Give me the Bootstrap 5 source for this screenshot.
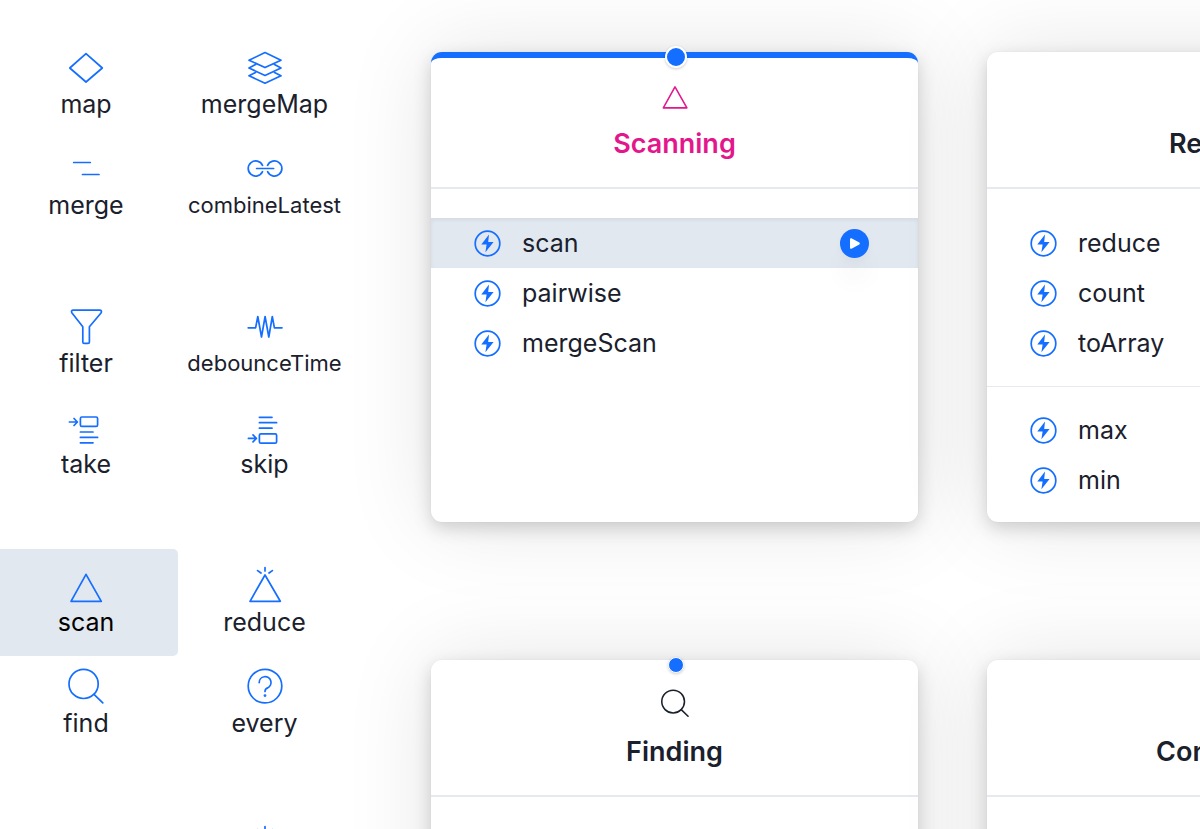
<!DOCTYPE html>
<html lang="en">
<head>
<meta charset="utf-8">
<meta name="viewport" content="width=device-width, initial-scale=1">
<title>Operators</title>
<link href="https://cdn.jsdelivr.net/npm/bootstrap@5.3.0/dist/css/bootstrap.min.css" rel="stylesheet">
<style>
  :root { --ink: #1a202c; --blue: #146eff; --fill: #e2e8f0; --line: #e6eaf0; --pink: #e3168c; }
  body { font-family: Inter, "Liberation Sans", sans-serif; color: var(--ink); background: #fff; }
  svg { display: block; overflow: visible; fill: none; stroke: currentColor; stroke-width: 1.7; stroke-linecap: round; stroke-linejoin: round; }

  /* operator palette */
  .palette { display: grid; grid-template-columns: 172px 173px; column-gap: 6px; padding-top: 34px; }
  .palette-group { display: grid; grid-template-columns: subgrid; grid-column: 1 / -1; }
  .palette-group + .palette-group { margin-top: 57px; }
  .op { color: var(--ink); padding: 16px 0 13px; font-size: 25px; line-height: 36px; }
  .op svg { width: 36px; height: 36px; color: var(--blue); }
  .op-long { font-size: 22px; }
  .op.active { color: #000; background: var(--fill); border-radius: 0 5px 5px 0; margin: -3px -6px -3px 0; padding: 19px 6px 16px 0; }

  /* board of category panels */
  .board { padding: 52px 0 0 80px; }
  .board-grid { display: grid; grid-template-columns: 487px 487px; gap: 138px 69px; }
  .panel { border: 0; border-radius: 11px; min-height: 470px; color: var(--ink);
    box-shadow: 0 0 2px rgba(0,0,0,.05), 0 6px 18px rgba(0,0,0,.17), 0 0 90px rgba(0,0,0,.11); }
  .panel-head { padding: 30px 0 25px; gap: 16px; border-bottom: 2px solid var(--line); }
  .panel-head svg { width: 28px; height: 28px; stroke-width: 2; }
  .panel-head h2 { font-size: 27px; line-height: 36px; font-weight: 600; }
  .panel.selected { border-top: 6px solid var(--blue); }
  .panel.selected .panel-head { padding-top: 24px; color: var(--pink); }
  .pin { width: 16px; height: 16px; background: var(--blue); border: 1px solid #fff; top: 5px; left: calc(50% + 1px); box-shadow: 0 1px 3px rgba(0,0,0,.2); }
  .selected .pin { width: 22px; height: 22px; border-width: 2px; top: -1px; }
  .rows { padding: 29px 0 18px; }
  .rows + .rows { padding: 18px 0 17px; border-top: 1px solid var(--line); }
  .entry { height: 50px; padding: 0 49px 0 43px; gap: 21px; font-size: 25px; line-height: 36px; }
  .entry svg { width: 27px; height: 27px; color: var(--blue); }
  .entry.current { background: var(--fill); box-shadow: inset 0 2px 4px rgba(0,0,0,.06); }
  .play { width: 29px; height: 29px; background: var(--blue); color: #fff; box-shadow: 0 4px 8px rgba(0,0,0,.03), 0 24px 24px rgba(0,0,0,.03); }
  .play .tri { width: 29px; height: 29px; color: #fff; }
</style>
</head>
<body class="vh-100 overflow-hidden">

<svg width="0" height="0" class="position-absolute" aria-hidden="true">
  <symbol id="i-map" viewBox="0 0 36 36"><path d="M18 3.7 34.3 18 18 32 1.8 18Z"/></symbol>
  <symbol id="i-layers" viewBox="0 0 36 36"><path d="M18 2.6 34 10.2 18 17.6 2 10.2ZM8.5 14.6 2 18 18 25.4 34 18 27.5 14.6M8.5 22.4 2 25.8 18 33.2 34 25.8 27.5 22.4"/></symbol>
  <symbol id="i-merge" viewBox="0 0 36 36"><path d="M5.7 11.5H22.3M14.5 23.5H31"/></symbol>
  <symbol id="i-link" viewBox="0 0 36 36"><path d="M15.5 14.3A7.5 7.5 0 1 0 15.5 20.7M20.6 14.3A7.5 7.5 0 1 1 20.6 20.7M9.6 17.5H26.6"/></symbol>
  <symbol id="i-filter" viewBox="0 0 36 36"><path d="M5 1.2H32Q34.3 1.6 33 4L21.4 17.8V33Q21.4 34.4 20 34.4H16.2Q14.8 34.4 14.8 33V17.8L4 4Q2.6 1.6 5 1.2Z"/></symbol>
  <symbol id="i-wave" viewBox="0 0 36 36"><path d="M1.2 18.8H8.6L10.8 7.5 14.5 28 18.1 7.5 21.8 28 25.3 7.5 27.4 18.8H35"/></symbol>
  <symbol id="i-take" viewBox="0 0 36 36"><rect x="12.4" y="7" width="17.2" height="9.4" rx="1.5"/><path d="M1.4 12H9.4M6 8.5 9.4 12 6 15.5M12.4 22H25M12.4 27.4H29.6M12.4 32.8H25"/></symbol>
  <symbol id="i-skip" viewBox="0 0 36 36"><rect x="12.4" y="23.8" width="17.2" height="9.4" rx="1.5"/><path d="M1.4 28.4H9.4M6 24.9 9.4 28.4 6 31.9M12.4 7.3H25M12.4 12.7H29.6M12.4 18.2H25"/></symbol>
  <symbol id="i-scan" viewBox="0 0 36 36"><path d="M18 6.3 33.3 33.3H3Z"/></symbol>
  <symbol id="i-reduce" viewBox="0 0 36 36" overflow="visible"><path d="M18 7 33.3 33.3H3ZM18-.5V3M10.6 2.6 14 5M25.4 2.6 22 5"/></symbol>
  <symbol id="i-find" viewBox="0 0 36 36" overflow="visible"><circle cx="15.6" cy="14.9" r="14.6"/><path d="M26 25.3 34.8 33.8"/></symbol>
  <symbol id="i-every" viewBox="0 0 36 36" overflow="visible"><circle cx="18" cy="17.1" r="16.8"/><path d="M12.2 13.6A5.9 5.9 0 1 1 20.6 18.9Q18 20 18 22.4"/><circle cx="18" cy="26.6" r=".6" fill="currentColor"/></symbol>
  <symbol id="i-bolt" viewBox="0 0 27 27"><circle cx="13.5" cy="13.5" r="12.3"/><path fill="currentColor" stroke="none" d="M15 4.6 7.3 14.4H12.6L11.4 22.2 19.6 12H14.2Z"/></symbol>
</svg>

<div class="d-flex">
  <nav class="palette flex-shrink-0 align-content-start text-center" aria-label="Operators">
    <div class="palette-group">
      <a href="#map" class="op d-flex flex-column align-items-center text-decoration-none"><svg aria-hidden="true"><use href="#i-map"/></svg>map</a>
      <a href="#mergeMap" class="op d-flex flex-column align-items-center text-decoration-none"><svg aria-hidden="true"><use href="#i-layers"/></svg>mergeMap</a>
      <a href="#merge" class="op d-flex flex-column align-items-center text-decoration-none"><svg aria-hidden="true"><use href="#i-merge"/></svg>merge</a>
      <a href="#combineLatest" class="op op-long d-flex flex-column align-items-center text-decoration-none"><svg aria-hidden="true"><use href="#i-link"/></svg>combineLatest</a>
    </div>
    <div class="palette-group">
      <a href="#filter" class="op d-flex flex-column align-items-center text-decoration-none"><svg aria-hidden="true"><use href="#i-filter"/></svg>filter</a>
      <a href="#debounceTime" class="op op-long d-flex flex-column align-items-center text-decoration-none"><svg aria-hidden="true"><use href="#i-wave"/></svg>debounceTime</a>
      <a href="#take" class="op d-flex flex-column align-items-center text-decoration-none"><svg aria-hidden="true"><use href="#i-take"/></svg>take</a>
      <a href="#skip" class="op d-flex flex-column align-items-center text-decoration-none"><svg aria-hidden="true"><use href="#i-skip"/></svg>skip</a>
    </div>
    <div class="palette-group">
      <a href="#scan" class="op active d-flex flex-column align-items-center text-decoration-none" aria-current="true"><svg aria-hidden="true"><use href="#i-scan"/></svg>scan</a>
      <a href="#reduce" class="op d-flex flex-column align-items-center text-decoration-none"><svg aria-hidden="true"><use href="#i-reduce"/></svg>reduce</a>
      <a href="#find" class="op d-flex flex-column align-items-center text-decoration-none"><svg aria-hidden="true"><use href="#i-find"/></svg>find</a>
      <a href="#every" class="op d-flex flex-column align-items-center text-decoration-none"><svg aria-hidden="true"><use href="#i-every"/></svg>every</a>
    </div>
    <div class="palette-group">
      <span></span>
      <a href="#more" class="op d-flex flex-column align-items-center text-decoration-none" aria-label="more"><svg aria-hidden="true"><use href="#i-reduce"/></svg></a>
    </div>
  </nav>

  <main class="board flex-grow-1 overflow-hidden vh-100">
    <div class="board-grid">
      <section class="card panel selected">
        <span class="pin position-absolute translate-middle rounded-circle"></span>
        <header class="panel-head d-flex flex-column align-items-center">
          <svg aria-hidden="true"><use href="#i-scan"/></svg>
          <h2 class="m-0">Scanning</h2>
        </header>
        <ul class="rows list-unstyled m-0">
          <li class="entry current d-flex align-items-center"><svg aria-hidden="true"><use href="#i-bolt"/></svg>scan
            <button type="button" class="play btn p-0 border-0 rounded-circle ms-auto" aria-label="Play scan"><svg class="tri" viewBox="0 0 29 29" aria-hidden="true"><path fill="currentColor" d="M11 10.2 18.8 14.5 11 18.8Z" stroke-width="2"/></svg></button></li>
          <li class="entry d-flex align-items-center"><svg aria-hidden="true"><use href="#i-bolt"/></svg>pairwise</li>
          <li class="entry d-flex align-items-center"><svg aria-hidden="true"><use href="#i-bolt"/></svg>mergeScan</li>
        </ul>
      </section>

      <section class="card panel">
        <header class="panel-head d-flex flex-column align-items-center">
          <svg aria-hidden="true"><use href="#i-reduce"/></svg>
          <h2 class="m-0">Reducing</h2>
        </header>
        <ul class="rows list-unstyled m-0">
          <li class="entry d-flex align-items-center"><svg aria-hidden="true"><use href="#i-bolt"/></svg>reduce</li>
          <li class="entry d-flex align-items-center"><svg aria-hidden="true"><use href="#i-bolt"/></svg>count</li>
          <li class="entry d-flex align-items-center"><svg aria-hidden="true"><use href="#i-bolt"/></svg>toArray</li>
        </ul>
        <ul class="rows list-unstyled m-0">
          <li class="entry d-flex align-items-center"><svg aria-hidden="true"><use href="#i-bolt"/></svg>max</li>
          <li class="entry d-flex align-items-center"><svg aria-hidden="true"><use href="#i-bolt"/></svg>min</li>
        </ul>
      </section>

      <section class="card panel">
        <span class="pin position-absolute translate-middle rounded-circle"></span>
        <header class="panel-head d-flex flex-column align-items-center">
          <svg aria-hidden="true"><use href="#i-find"/></svg>
          <h2 class="m-0">Finding</h2>
        </header>
      </section>

      <section class="card panel">
        <header class="panel-head d-flex flex-column align-items-center">
          <svg aria-hidden="true"><use href="#i-every"/></svg>
          <h2 class="m-0">Conditional</h2>
        </header>
      </section>
    </div>
  </main>
</div>

<script src="https://cdn.jsdelivr.net/npm/bootstrap@5.3.0/dist/js/bootstrap.bundle.min.js"></script>
</body>
</html>
